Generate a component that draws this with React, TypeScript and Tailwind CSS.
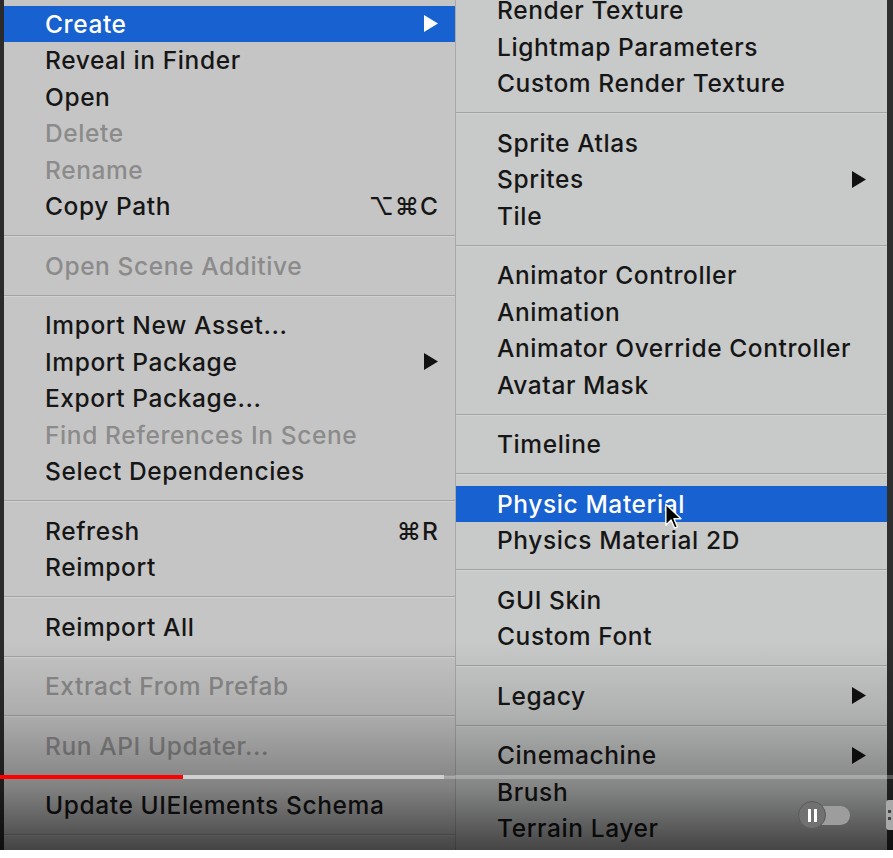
type Item =
  | { sep: true }
  | { label: string; disabled?: boolean; active?: boolean; sub?: boolean; shortcut?: string }

const LEFT_ITEMS: Item[] = [
  { label: 'Create', active: true, sub: true },
  { label: 'Reveal in Finder' },
  { label: 'Open' },
  { label: 'Delete', disabled: true },
  { label: 'Rename', disabled: true },
  { label: 'Copy Path', shortcut: '⌥⌘C' },
  { sep: true },
  { label: 'Open Scene Additive', disabled: true },
  { sep: true },
  { label: 'Import New Asset...' },
  { label: 'Import Package', sub: true },
  { label: 'Export Package...' },
  { label: 'Find References In Scene', disabled: true },
  { label: 'Select Dependencies' },
  { sep: true },
  { label: 'Refresh', shortcut: '⌘R' },
  { label: 'Reimport' },
  { sep: true },
  { label: 'Reimport All' },
  { sep: true },
  { label: 'Extract From Prefab', disabled: true },
  { sep: true },
  { label: 'Run API Updater...', disabled: true },
  { sep: true },
  { label: 'Update UIElements Schema' },
  { sep: true },
]

const RIGHT_ITEMS: Item[] = [
  { label: 'Render Texture' },
  { label: 'Lightmap Parameters' },
  { label: 'Custom Render Texture' },
  { sep: true },
  { label: 'Sprite Atlas' },
  { label: 'Sprites', sub: true },
  { label: 'Tile' },
  { sep: true },
  { label: 'Animator Controller' },
  { label: 'Animation' },
  { label: 'Animator Override Controller' },
  { label: 'Avatar Mask' },
  { sep: true },
  { label: 'Timeline' },
  { sep: true },
  { label: 'Physic Material', active: true },
  { label: 'Physics Material 2D' },
  { sep: true },
  { label: 'GUI Skin' },
  { label: 'Custom Font' },
  { sep: true },
  { label: 'Legacy', sub: true },
  { sep: true },
  { label: 'Cinemachine', sub: true },
  { label: 'Brush' },
  { label: 'Terrain Layer' },
]

function SubArrow({ light }: { light?: boolean }) {
  return (
    <svg width="16" height="17" viewBox="0 0 16 17" className="shrink-0">
      <path d="M1 0 L15 8.5 L1 17 Z" fill={light ? '#ffffff' : '#111111'} />
    </svg>
  )
}

function MenuList({ items, pr }: { items: Item[]; pr: string }) {
  return (
    <div className="flex flex-col">
      {items.map((item, i) =>
        'sep' in item ? (
          <div key={i} className="h-[23px] flex flex-col justify-center">
            <div className="h-px bg-[#a3a3a3]" />
            <div className="h-px bg-[#d2d2d2]" />
          </div>
        ) : (
          <div
            key={i}
            className={`h-[36.5px] flex items-center pl-[41px] ${pr} ${
              item.active ? 'bg-[#1761d1] text-white' : item.disabled ? 'text-[#8b8b8b]' : 'text-[#161616]'
            }`}
          >
            <span className="flex-1 whitespace-nowrap tracking-[0.6px]">{item.label}</span>
            {item.shortcut && <span className="tracking-[1px]">{item.shortcut}</span>}
            {item.sub && <SubArrow light={item.active} />}
          </div>
        )
      )}
    </div>
  )
}

export default function App() {
  return (
    <div
      className="relative w-[893px] h-[858px] overflow-hidden bg-white text-[24.5px] font-medium leading-none"
      style={{ fontFamily: 'Inter, "DejaVu Sans", sans-serif' }}
    >
      <div className="flex h-[850px]">
        <div className="w-[4px] bg-[#2b2b2b]" />
        <div className="w-[452px] bg-[#c5c5c5] pt-[5.5px] border-r border-[#a9a9a9]">
          <MenuList items={LEFT_ITEMS} pr="pr-[16px]" />
        </div>
        <div className="w-[431px] bg-[#c8c9c9]">
          <div className="-mt-[8px]">
            <MenuList items={RIGHT_ITEMS} pr="pr-[20px]" />
          </div>
        </div>
        <div className="w-[6px] bg-[#2f2f2f]" />
      </div>

      {/* video bottom shade */}
      <div className="absolute left-0 right-0 top-[640px] h-[210px] bg-[linear-gradient(to_bottom,rgba(0,0,0,0)_0%,rgba(0,0,0,0.12)_35%,rgba(0,0,0,0.34)_70%,rgba(0,0,0,0.66)_100%)]" />

      {/* progress bar */}
      <div className="absolute left-0 right-0 top-[775px] h-[4px] flex">
        <div className="w-[183px] bg-[#ff0000]" />
        <div className="w-[261px] bg-[#cfcfcf]" />
        <div className="flex-1 bg-white/25" />
      </div>

      {/* autoplay toggle */}
      <div className="absolute left-[798px] top-[801px] w-[54px] h-[28px] flex items-center">
        <div className="absolute left-[12px] top-[5px] w-[40px] h-[19px] rounded-full bg-[#9d9d9d]" />
        <div className="relative w-[28px] h-[28px] rounded-full bg-[#717171] border border-[#5a5a5a] flex items-center justify-center gap-[3px]">
          <div className="w-[3px] h-[13px] bg-white" />
          <div className="w-[3px] h-[13px] bg-white" />
        </div>
      </div>
      <div className="absolute left-[886px] top-[800px] w-[12px] h-[30px] rounded-[3px] bg-[#a9a9a9] flex flex-col justify-center gap-[4px] pl-[2px]">
        <div className="w-[3px] h-[3px] bg-[#444]" />
        <div className="w-[3px] h-[3px] bg-[#444]" />
      </div>

      {/* mouse pointer */}
      <svg className="absolute left-[664px] top-[503px]" width="20" height="28" viewBox="0 0 16 24">
        <path d="M1 1 L1 19 L5.5 14.5 L8.5 21.5 L11 20.5 L8 13.5 L14 13.5 Z" fill="#000" stroke="#fff" strokeWidth="1.2" strokeLinejoin="round" />
      </svg>
    </div>
  )
}
